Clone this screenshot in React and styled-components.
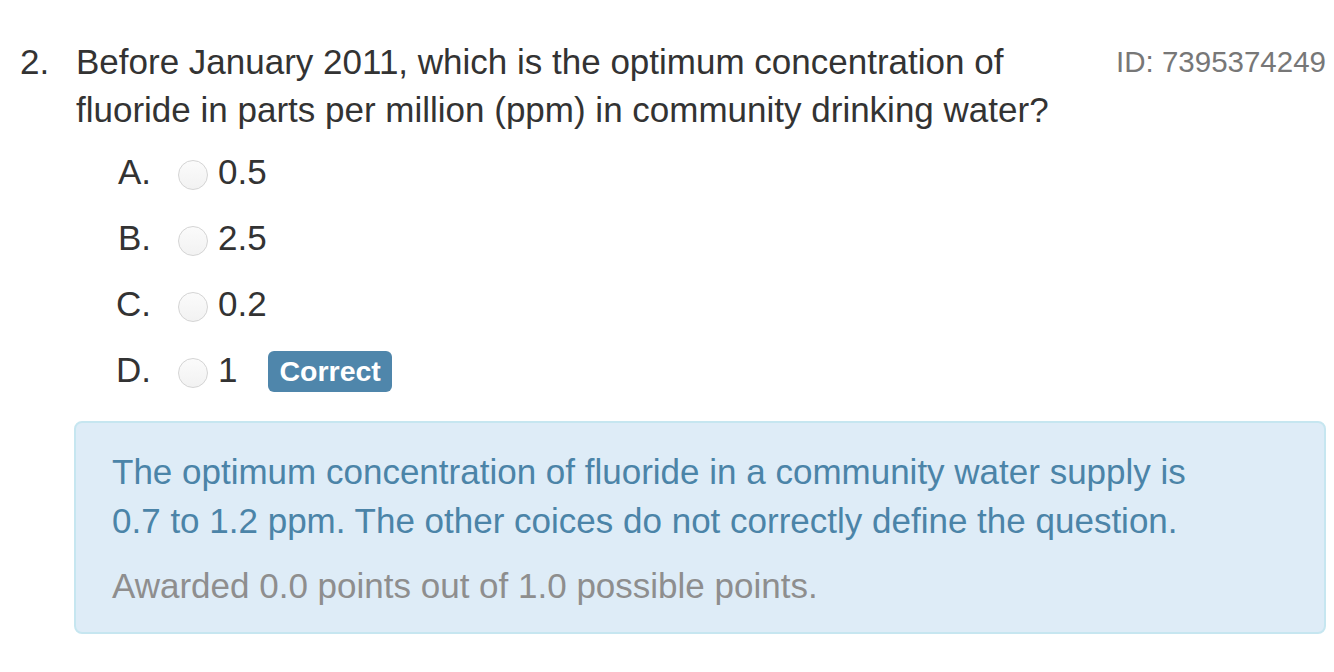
import styled, { createGlobalStyle } from 'styled-components';

const GlobalStyle = createGlobalStyle`
  body {
    margin: 0;
    background: #fff;
    font-family: "Liberation Sans", Arial, sans-serif;
    color: #333;
  }
`;

const Page = styled.div`
  padding: 38px 8px 0 20px;
  width: 1334px;
  box-sizing: border-box;
`;

const Header = styled.div`
  display: flex;
  align-items: flex-start;
`;

const Number = styled.div`
  width: 56px;
  flex: none;
  font-size: 35px;
  line-height: 48px;
`;

const Question = styled.div`
  flex: 1;
  font-size: 35px;
  line-height: 48px;
  max-width: 1030px;
`;

const QuestionId = styled.div`
  margin-left: auto;
  font-size: 29.5px;
  line-height: 48px;
  color: #777;
`;

const Options = styled.div`
  margin-top: 5px;
  display: flex;
  flex-direction: column;
`;

const OptionRow = styled.label`
  display: flex;
  align-items: center;
  height: 66px;
  font-size: 35px;
`;

const Letter = styled.span`
  width: 131px;
  text-align: right;
  flex: none;
`;

const Radio = styled.span`
  width: 30px;
  height: 30px;
  margin: 6px 10px 0 27px;
  border-radius: 50%;
  border: 1.5px solid #d4d4d4;
  background: linear-gradient(#fbfbfb, #f2f2f2);
  box-sizing: border-box;
  flex: none;
`;

const Badge = styled.span`
  margin: 3px 0 0 31px;
  padding: 0 11px;
  height: 41px;
  line-height: 41px;
  border-radius: 6px;
  background: #4f86ab;
  color: #fff;
  font-weight: bold;
  font-size: 28.5px;
`;

const Alert = styled.div`
  margin: 18px 0 0 54px;
  padding: 24px 90px 22px 36px;
  background: #deecf7;
  border: 2px solid #c6e6f0;
  border-radius: 8px;
`;

const Explanation = styled.p`
  margin: 0 0 17px;
  font-size: 35px;
  line-height: 49px;
  color: #4b84a8;
`;

const Points = styled.p`
  margin: 0;
  font-size: 35px;
  line-height: 48px;
  color: #8e8e8e;
`;

const options = [
  { letter: 'A.', value: '0.5' },
  { letter: 'B.', value: '2.5' },
  { letter: 'C.', value: '0.2' },
  { letter: 'D.', value: '1', correct: true },
];

export default function App() {
  return (
    <>
      <GlobalStyle />
      <Page>
        <Header>
          <Number>2.</Number>
          <Question>
            Before January 2011, which is the optimum concentration of fluoride in parts per million (ppm) in community drinking water?
          </Question>
          <QuestionId>ID: 7395374249</QuestionId>
        </Header>
        <Options>
          {options.map((o) => (
            <OptionRow key={o.letter}>
              <Letter>{o.letter}</Letter>
              <Radio />
              {o.value}
              {o.correct && <Badge>Correct</Badge>}
            </OptionRow>
          ))}
        </Options>
        <Alert>
          <Explanation>
            The optimum concentration of fluoride in a community water supply is 0.7 to 1.2 ppm. The other coices do not correctly define the question.
          </Explanation>
          <Points>Awarded 0.0 points out of 1.0 possible points.</Points>
        </Alert>
      </Page>
    </>
  );
}
